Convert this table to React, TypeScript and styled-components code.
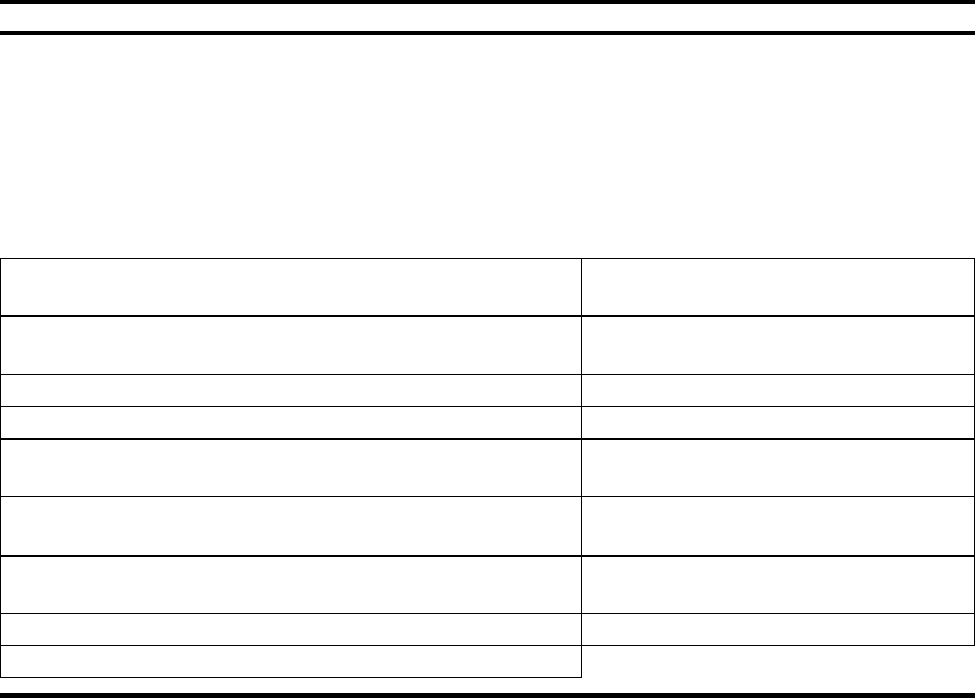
import styled, { createGlobalStyle } from "styled-components";

const GlobalStyle = createGlobalStyle`
    * {
        box-sizing: border-box;
    }

    body {
        margin: 0;
        background: #fff;
        color: #000;
        font-family: "Liberation Serif", "Times New Roman", serif;
    }
`;

interface RowSpec {
    height: number;
    thick?: boolean;
    lastRightEmpty?: boolean;
}

const rows: RowSpec[] = [
    { height: 59, thick: true },
    { height: 58 },
    { height: 32 },
    { height: 33, thick: true },
    { height: 57 },
    { height: 60, thick: true },
    { height: 57 },
    { height: 32 },
    { height: 32, lastRightEmpty: true },
];

const App = () => {
    return (
        <>
            <GlobalStyle />
            <Page>
                <Header />
                <Intro />
                <FormTable>
                    {rows.map((row, i) => (
                        <Row key={i} style={{ height: row.height }}>
                            <Cell $first $thick={row.thick} />
                            {row.lastRightEmpty ? <EmptyCell /> : <Cell $thick={row.thick} />}
                        </Row>
                    ))}
                </FormTable>
                <Footer />
            </Page>
        </>
    );
};

export default App;

const Page = styled.div`
    width: 975px;
    height: 698px;
    overflow: hidden;
    display: flex;
    flex-direction: column;
`;

const Header = styled.header`
    height: 35px;
    border-top: 4px solid #000;
    border-bottom: 4px solid #000;
    flex-shrink: 0;
`;

const Intro = styled.div`
    height: 223px;
    flex-shrink: 0;
`;

const FormTable = styled.div`
    display: flex;
    flex-direction: column;
    flex-shrink: 0;

    & > div:first-child > div {
        border-top: 1px solid #000;
    }

    & > div:first-child {
        height: auto;
    }
`;

const Row = styled.div`
    display: grid;
    grid-template-columns: 582px 393px;
`;

const Cell = styled.div<{ $first?: boolean; $thick?: boolean }>`
    border-left: ${(props) => (props.$first ? "1px solid #000" : "none")};
    border-right: 1px solid #000;
    border-bottom: ${(props) => (props.$thick ? "2px" : "1px")} solid #000;
`;

const EmptyCell = styled.div`
    border: none;
`;

const Footer = styled.footer`
    margin-top: 15px;
    border-top: 5px solid #000;
    flex-shrink: 0;
`;
